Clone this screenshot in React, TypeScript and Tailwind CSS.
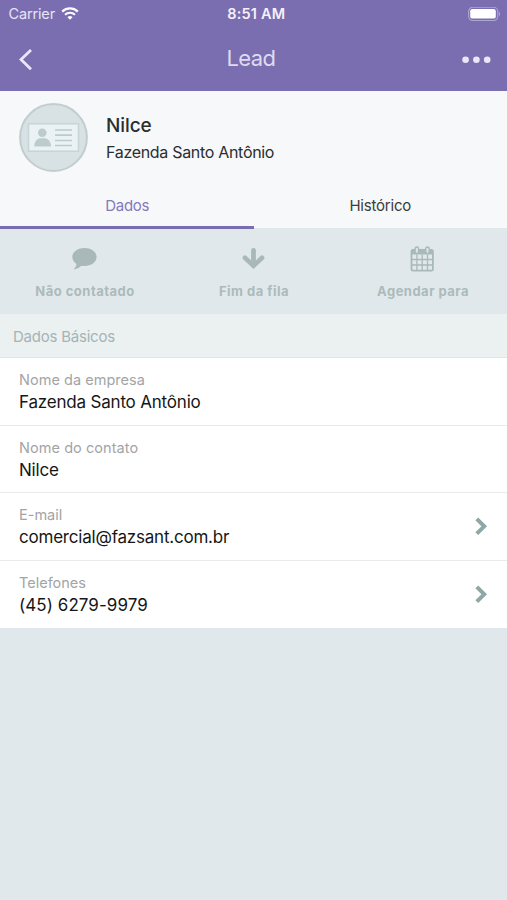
import React from "react";

function WifiIcon() {
  return (
    <svg width="18" height="14" viewBox="0 0 18 14" fill="none" stroke="#fbf9ff">
      <path d="M1.2 4.6 A11.2 11.2 0 0 1 16.8 4.6" strokeWidth="2.2" />
      <path d="M4 7.8 A7.2 7.2 0 0 1 14 7.8" strokeWidth="2.1" />
      <path d="M9 12.8 L6.4 10.2 A3.7 3.7 0 0 1 11.6 10.2 Z" fill="#fbf9ff" stroke="none" />
    </svg>
  );
}

function BatteryIcon() {
  return (
    <svg width="33" height="15" viewBox="0 0 33 15">
      <rect x="0.6" y="0.3" width="29.2" height="13.2" rx="4.2" fill="none" stroke="#aea6d2" strokeWidth="1.1" />
      <rect x="2.2" y="2" width="25.6" height="9.6" rx="2.2" fill="#fff" />
      <path d="M31 4.6 Q33.2 7 31 9.4 Z" fill="#aea6d2" />
    </svg>
  );
}

function ContactBadge() {
  return (
    <svg width="69" height="69" viewBox="0 0 69 69">
      <circle cx="34.5" cy="34.5" r="33.4" fill="#d8e1e4" stroke="#c1cdcf" strokeWidth="2" />
      <rect x="9.5" y="20.8" width="50" height="27.4" fill="#eaf2f4" stroke="#c6d5d7" strokeWidth="1.6" />
      <circle cx="23.3" cy="29.8" r="4.3" fill="#bccbcc" />
      <path d="M15.2 43.6 C15.2 38.5 18.2 35.6 21 35.3 H26 C29 35.6 32 38.5 32 43.6 Z" fill="#bccbcc" />
      <path d="M36 27H53M36 32.2H53M36 37.5H53M36 42.5H53" stroke="#bccbcc" strokeWidth="1.7" />
    </svg>
  );
}

function BubbleIcon() {
  return (
    <svg width="25" height="22" viewBox="0 0 25 22" fill="#a9b8b8">
      <path d="M12.5 0 C19.2 0 24.6 3.9 24.6 9 S19.2 18 12.5 18 C11.4 18 10.3 17.9 9.3 17.7 C7.2 19.9 4.3 21.2 1.6 21.4 C3.1 19.8 4.2 18 4.5 15.9 C1.9 14.2 .3 11.8 .3 9 C.3 3.9 5.8 0 12.5 0 Z" />
    </svg>
  );
}

function ArrowDownIcon() {
  return (
    <svg width="23" height="22" viewBox="0 0 23 22" fill="none" stroke="#a9b8b8" strokeWidth="4.6" strokeLinecap="round">
      <path d="M11.5 2.4V16" strokeWidth="4.8" />
      <path d="M2.9 9.8L11.5 17.8L20.1 9.8" />
    </svg>
  );
}

function CalendarIcon() {
  return (
    <svg width="25" height="26" viewBox="0 0 25 26" fill="none" stroke="#a9b8b8">
      <rect x="1.5" y="4" width="21.4" height="20.6" rx="1.3" strokeWidth="1.8" />
      <path d="M1.5 4H22.9V8.5H1.5Z" fill="#a9b8b8" stroke="none" />
      <path d="M6.9 8.5V24M12.2 8.5V24M17.5 8.5V24M2 13.5H22.5M2 19H22.5" strokeWidth="1.3" />
      <rect x="5.1" y="1" width="3.5" height="6.5" rx="1.7" fill="#dce5e7" strokeWidth="1.4" />
      <rect x="15.7" y="1" width="3.5" height="6.5" rx="1.7" fill="#dce5e7" strokeWidth="1.4" />
    </svg>
  );
}

function Chevron() {
  return (
    <svg width="14" height="20" viewBox="0 0 14 20" fill="none" stroke="#8da8a7" strokeWidth="4">
      <path d="M1.8 2.9L9.2 10.3L1.8 17.7" />
    </svg>
  );
}

const fields = [
  { label: "Nome da empresa", value: "Fazenda Santo Antônio", labelClass: "tracking-[0.03px]", valueClass: "tracking-[-0.19px]", link: false },
  { label: "Nome do contato", value: "Nilce", labelClass: "tracking-[0.06px]", valueClass: "tracking-[-0.2px]", link: false },
  { label: "E-mail", value: "comercial@fazsant.com.br", labelClass: "tracking-[0px]", valueClass: "tracking-[-0.21px]", link: true },
  { label: "Telefones", value: "(45) 6279-9979", labelClass: "tracking-[0px]", valueClass: "tracking-[0.06px]", link: true },
];

const actions = [
  { label: "Não contatado", icon: <BubbleIcon /> },
  { label: "Fim da fila", icon: <ArrowDownIcon /> },
  { label: "Agendar para", icon: <CalendarIcon /> },
];

export default function App() {
  return (
    <div className="flex h-[900px] w-full flex-col overflow-hidden bg-[#e1e8eb] font-['Inter',sans-serif] whitespace-nowrap">
      <header className="h-[91px] shrink-0 bg-[#7a6eb0]">
        <div className="grid h-7 grid-cols-3 items-center pr-[6px] pl-[8.5px] text-white">
          <div className="flex items-center gap-[6.5px]">
            <span className="text-[14.5px] leading-7 tracking-[-0.15px] text-[#e9e4f7]">Carrier</span>
            <WifiIcon />
          </div>
          <span className="pl-[3px] text-center text-[14.5px] leading-7 font-semibold tracking-[0.2px] text-[#f4f1fc]">8:51 AM</span>
          <div className="flex justify-end"><BatteryIcon /></div>
        </div>
        <div className="grid h-[63px] grid-cols-3 items-center pr-4 pl-[19px]">
          <svg width="14" height="22" viewBox="0 0 14 22" fill="none" stroke="#ebe7f8" strokeWidth="2.8">
            <path d="M12 1L2 10.6L12 20.2" />
          </svg>
          <h1 className="-mt-[3px] pr-[8px] text-center text-[22px] leading-7 tracking-[-0.6px] text-[#dfdaf1]">Lead</h1>
          <svg className="justify-self-end" width="29" height="8" viewBox="0 0 29 8" fill="#ebe7f8">
            <circle cx="3.6" cy="3.7" r="3.3" />
            <circle cx="14.4" cy="3.7" r="3.3" />
            <circle cx="25.2" cy="3.7" r="3.3" />
          </svg>
        </div>
      </header>

      <section className="relative z-10 h-[137px] shrink-0 bg-[#f6f8fa]">
        <div className="flex h-[93px] items-center gap-[18px] pl-[19px]">
          <ContactBadge />
          <div className="pt-[1px] text-[#2b2d2f]">
            <h2 className="text-[19px] leading-[27px] font-medium tracking-[-0.1px]">Nilce</h2>
            <p className="text-[16px] leading-[26px] tracking-[-0.31px]">Fazenda Santo Antônio</p>
          </div>
        </div>
        <nav className="grid h-11 grid-cols-2 text-center text-[15px]">
          <button className="h-[45px] border-b-[3px] border-[#796caf] pt-px pl-px leading-[42px] tracking-[-0.3px] text-[#8579bd]">Dados</button>
          <button className="pb-[2px] leading-[42px] tracking-[-0.2px] text-[#3a3c3d]">Histórico</button>
        </nav>
      </section>

      <div className="grid h-[86px] shrink-0 grid-cols-3 bg-[#e1e8eb] pt-[17px]">
        {actions.map((a) => (
          <button key={a.label} className="flex flex-col items-center">
            <span className="flex h-7 items-center">{a.icon}</span>
            <span className="mt-[9px] pl-px text-[13px] leading-[18px] font-bold tracking-[0.48px] text-[#abbbbb]">{a.label}</span>
          </button>
        ))}
      </div>

      <h3 className="h-11 shrink-0 border-b border-[#e2e8e9] bg-[#ebf0f1] pl-[13px] text-[15px] leading-[45px] tracking-[-0.23px] text-[#a3b5b4]">
        Dados Básicos
      </h3>

      <main className="shrink-0 bg-white">
        {fields.map((f) => (
          <div key={f.label} className="flex h-[67.5px] items-center justify-between border-b border-[#e8ebec] pr-[18px] pl-[19px] last:border-0">
            <div className="pt-[1px]">
              <div className={`text-[14.5px] leading-[22px] text-[#a2a4a5] ${f.labelClass}`}>{f.label}</div>
              <div className={`text-[17px] leading-[23px] text-[#151617] ${f.valueClass}`}>{f.value}</div>
            </div>
            {f.link && <Chevron />}
          </div>
        ))}
      </main>
    </div>
  );
}
